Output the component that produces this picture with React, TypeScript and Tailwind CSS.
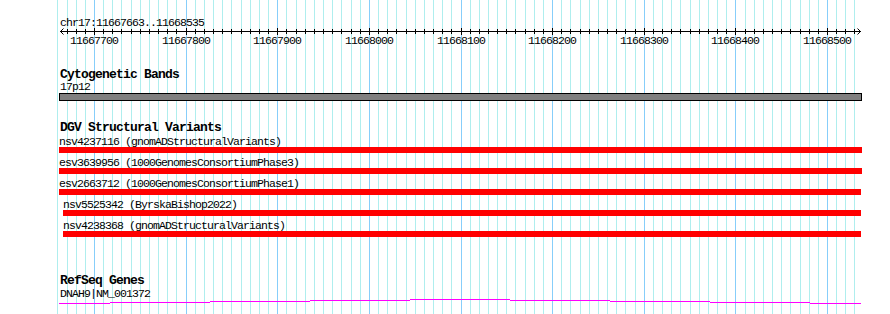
const START = 11667700;
const SCALE = 0.91625;
const toX = (bp: number) => Math.round(94 + (bp - START) * SCALE);

const gridBps: number[] = [];
for (let bp = 11667660; bp <= 11668530; bp += 10) gridBps.push(bp);
const majorBps = gridBps.filter((bp) => bp % 100 === 0);

const variants = [
  { id: "nsv4237116", source: "gnomADStructuralVariants", from: 59, to: 862 },
  { id: "esv3639956", source: "1000GenomesConsortiumPhase3", from: 59, to: 862 },
  { id: "esv2663712", source: "1000GenomesConsortiumPhase1", from: 59, to: 861 },
  { id: "nsv5525342", source: "ByrskaBishop2022", from: 63, to: 861 },
  { id: "nsv4238368", source: "gnomADStructuralVariants", from: 63, to: 861 },
];

// stepped intron line of the gene, [x1, x2, y]
const geneSteps: [number, number, number][] = [
  [59, 110, 4],
  [110, 210, 3],
  [210, 310, 2],
  [310, 410, 1],
  [410, 510, 0],
  [510, 610, 1],
  [610, 710, 2],
  [710, 810, 3],
  [810, 861, 4],
];

const small = "text-[11.5px] leading-[12px] tracking-[-0.9px] whitespace-pre";
const bold = "text-[13px] font-bold leading-[13px] tracking-[-0.8px] whitespace-pre";

function Grid() {
  return (
    <svg className="absolute inset-0" width={890} height={314}>
      {gridBps.map((bp) => (
        <line
          key={bp}
          x1={toX(bp) + 0.5}
          x2={toX(bp) + 0.5}
          y1={0}
          y2={314}
          stroke={bp % 100 === 0 ? "#87cefa" : "#afeeee"}
          strokeWidth={1}
        />
      ))}
    </svg>
  );
}

function Ruler() {
  return (
    <div className="relative h-[48px]">
      <svg className="absolute left-0 top-0" width={890} height={48}>
        <line x1={60} x2={861} y1={31.5} y2={31.5} stroke="#000" />
        <polyline points="63.5,28.5 60.5,31.5 63.5,34.5" fill="none" stroke="#000" />
        <polyline points="857.5,28.5 860.5,31.5 857.5,34.5" fill="none" stroke="#000" />
        {gridBps
          .filter((bp) => bp > 11667663 && bp < 11668535)
          .map((bp) => (
            <line
              key={bp}
              x1={toX(bp) + 0.5}
              x2={toX(bp) + 0.5}
              y1={bp % 100 === 0 ? 28 : 29}
              y2={bp % 100 === 0 ? 35 : 34}
              stroke="#000"
            />
          ))}
      </svg>
      <div className={`${small} pl-[60px] pt-[17px]`}>chr17:11667663..11668535</div>
      {majorBps.map((bp) => (
        <div
          key={bp}
          className={`${small} absolute top-[35px]`}
          style={{ left: toX(bp) - 24 }}
        >
          {bp}
        </div>
      ))}
    </div>
  );
}

export default function App() {
  return (
    <div className="relative h-[314px] w-[890px] overflow-hidden bg-white font-['Liberation_Mono',monospace] text-black">
      <Grid />
      <div className="relative flex flex-col">
        <Ruler />

        {/* Cytogenetic bands */}
        <div className="mt-[20px] flex flex-col">
          <div className={`${bold} h-[13px] pl-[60px]`}>Cytogenetic Bands</div>
          <div className={`${small} h-[12px] pl-[60px]`}>17p12</div>
          <div className="ml-[59px] h-[8px] w-[803px] border border-black bg-[#808080]" />
        </div>

        {/* DGV */}
        <div className="mt-[20px] flex flex-col">
          <div className={`${bold} h-[15px] pl-[60px]`}>DGV Structural Variants</div>
          {variants.map((v) => (
            <div key={v.id} className="flex h-[21px] flex-col">
              <div className={`${small} h-[11px]`} style={{ paddingLeft: v.from }}>
                {v.id} ({v.source})
              </div>
              <div
                className="h-[6px] bg-[#ff0000]"
                style={{ marginLeft: v.from, width: v.to - v.from }}
              />
            </div>
          ))}
        </div>

        {/* RefSeq */}
        <div className="mt-[33px] flex flex-col">
          <div className={`${bold} h-[14px] pl-[60px]`}>RefSeq Genes</div>
          <div className={`${small} h-[11px] pl-[60px]`}>DNAH9|NM_001372</div>
          <svg width={890} height={6}>
            {geneSteps.map(([a, b, y]) => (
              <line key={a} x1={a} x2={b} y1={y + 0.5} y2={y + 0.5} stroke="#ff00ff" />
            ))}
          </svg>
        </div>
      </div>
    </div>
  );
}
